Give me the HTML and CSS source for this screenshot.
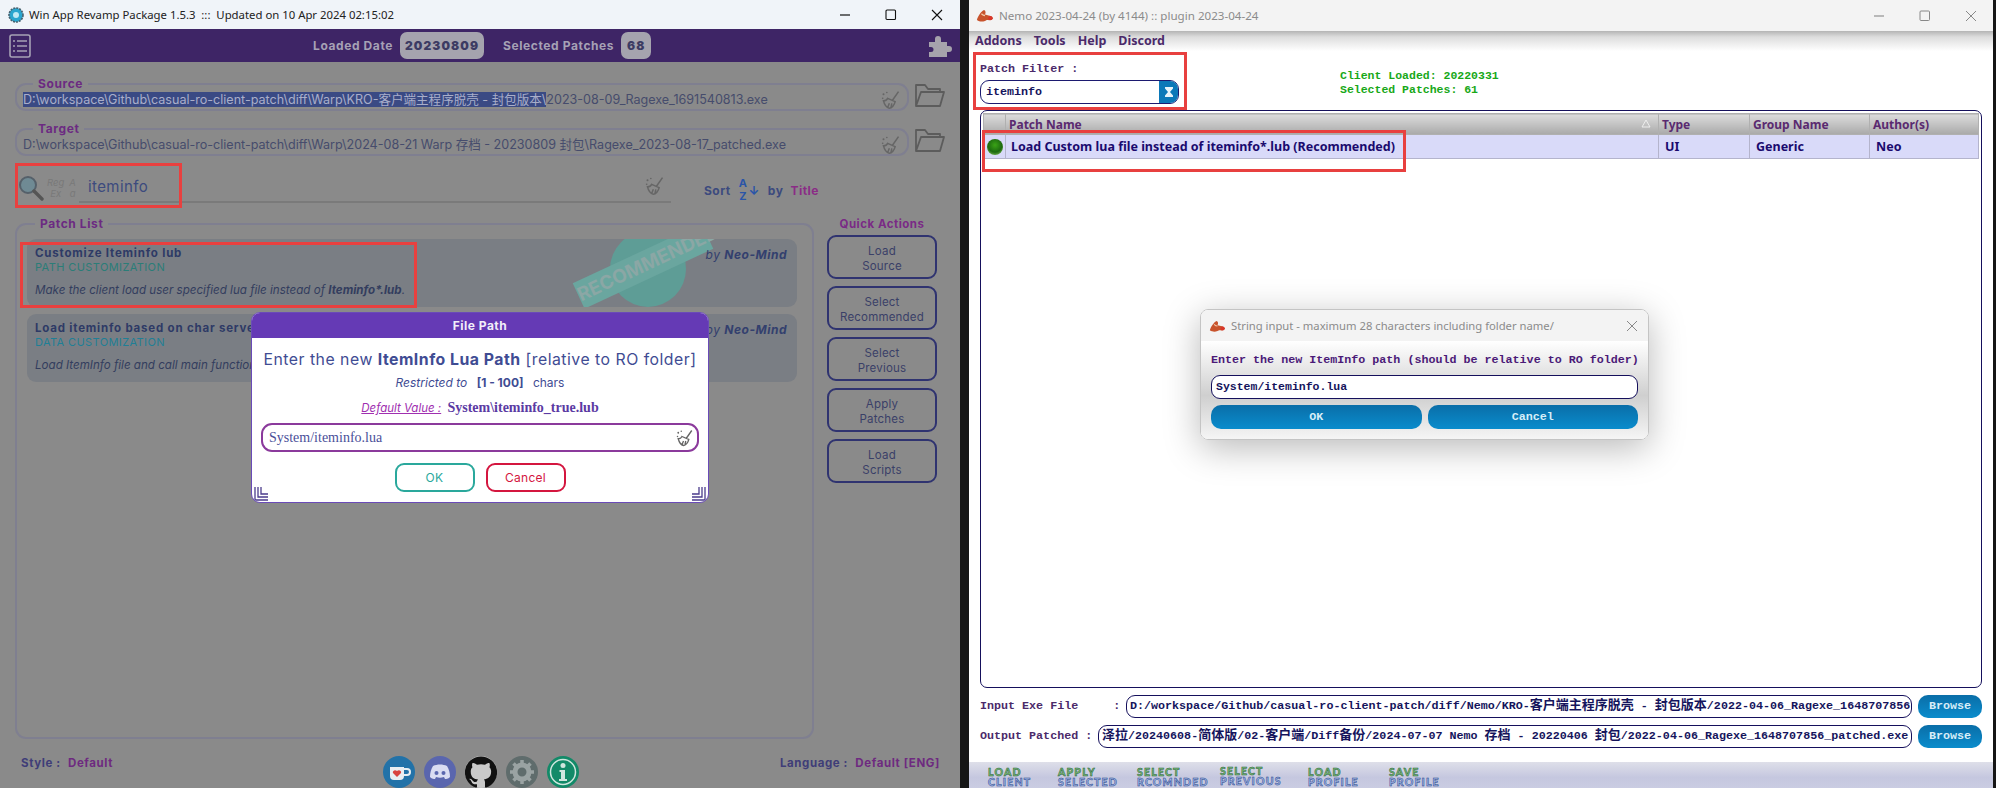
FILE: index.html
```html
<!DOCTYPE html>
<html lang="en">
<head>
  <meta charset="UTF-8">
  <title>Patchers</title>
  <link rel="stylesheet" href="styles.css">
</head>
<body>

  <svg class="defs" width="0" height="0">
    <symbol id="broom" viewBox="0 0 24 24">
      <path d="M21 2 14 12M8 10l9 4c-1 4-4 8-7 8-4-1-6-5-7-9 2 0 4-1 5-3ZM8 21l2-5M12 21l1-5" fill="none" stroke="currentColor" stroke-width="1.8"/>
      <circle cx="3" cy="5" r="1.2" fill="currentColor"/><circle cx="7" cy="3" r="1" fill="currentColor"/><circle cx="2" cy="10" r="1" fill="currentColor"/>
    </symbol>
    <symbol id="folder" viewBox="0 0 30 25">
      <path d="M1 23V2h9l3 4h12v3M1 23 6 9h23l-4 14H1Z" fill="none" stroke="currentColor" stroke-width="1.8" stroke-linejoin="round"/>
    </symbol>
    <symbol id="crab" viewBox="0 0 20 16">
      <path d="M1 13c1-4 5-10 8-11 2 1 2 3 1 5l4 1c2 0 4 1 5 3-2 3-5 2-7 2l-2 1c-3 1-6 1-9-1Z" fill="#c8532c"/>
      <path d="M6 6c1 1 3 2 4 2" stroke="#f3c9a8" stroke-width="1.4" fill="none"/>
      <circle cx="16" cy="11" r="2.4" fill="#d9362a"/>
    </symbol>
  </svg>

  <!-- left window -->
  <section class="win-left">
    <div class="title-bar">
      <svg class="app-icon" width="16" height="16" viewBox="0 0 16 16"><circle cx="8" cy="8" r="7" fill="#2aa6cf" stroke="#46606e" stroke-width="1.6" stroke-dasharray="2 1"/><circle cx="8" cy="8" r="3" fill="#bfeaf5"/></svg>
      <span class="title-text">Win App Revamp Package 1.5.3 &nbsp;:::&nbsp; Updated on 10 Apr 2024 02:15:02</span>
      <div class="win-btns">
        <svg width="12" height="12" viewBox="0 0 12 12"><path d="M1 6h10" stroke="#111" stroke-width="1.2"/></svg>
        <svg width="12" height="12" viewBox="0 0 12 12"><rect x="1" y="1" width="9.5" height="9.5" rx="1" fill="none" stroke="#111" stroke-width="1.1"/></svg>
        <svg width="12" height="12" viewBox="0 0 12 12"><path d="M1 1l10 10M11 1 1 11" stroke="#111" stroke-width="1.1"/></svg>
      </div>
    </div>

    <header class="top-bar">
      <svg class="menu-icon" width="22" height="24" viewBox="0 0 22 24"><rect x="1" y="1" width="20" height="22" rx="2" fill="none" stroke="#a6a1b5" stroke-width="1.6"/><path d="M8 7h10M8 12h10M8 17h10M4 7h2M4 12h2M4 17h2" stroke="#a6a1b5" stroke-width="1.6"/></svg>
      <div class="stats">
        <span>Loaded Date</span><b class="chip chip-date">20230809</b>
        <span class="stat-2">Selected Patches</span><b class="chip chip-count">68</b>
      </div>
      <svg class="puzzle" width="24" height="24" viewBox="0 0 24 24"><path d="M1 8h6V5a3 3 0 1 1 6 0v3h6v4h2a3 3 0 1 1 0 6h-2v5H1v-5h2a2.5 2.5 0 1 0 0-5H1Z" fill="#a6a3ac"/></svg>
    </header>

    <main class="main">
      <div class="path-row">
        <fieldset class="path-field">
          <legend>Source</legend>
          <div class="path-inner">
            <span class="path-text"><span class="sel">D:\workspace\Github\casual-ro-client-patch\diff\Warp\KRO-客户端主程序脱壳 - 封包版本\</span>2023-08-09_Ragexe_1691540813.exe</span>
            <svg class="broom" width="20" height="20"><use href="#broom"/></svg>
          </div>
        </fieldset>
        <svg class="folder" width="30" height="25"><use href="#folder"/></svg>
      </div>
      <div class="path-row">
        <fieldset class="path-field">
          <legend>Target</legend>
          <div class="path-inner">
            <span class="path-text">D:\workspace\Github\casual-ro-client-patch\diff\Warp\2024-08-21 Warp 存档 - 20230809 封包\Ragexe_2023-08-17_patched.exe</span>
            <svg class="broom" width="20" height="20"><use href="#broom"/></svg>
          </div>
        </fieldset>
        <svg class="folder" width="30" height="25"><use href="#folder"/></svg>
      </div>

      <div class="search-row">
        <svg class="magnifier" width="26" height="26" viewBox="0 0 26 26"><circle cx="10" cy="10" r="8" fill="#6f8a94" stroke="#55606a" stroke-width="2"/><path d="M16 16l8 8" stroke="#555" stroke-width="3.4" stroke-linecap="round"/></svg>
        <div class="search-flags">
          <span>Reg<br>Ex</span><span>A<br>a</span>
        </div>
        <div class="search-input">
          <span>iteminfo</span>
          <svg class="broom" width="20" height="20"><use href="#broom"/></svg>
        </div>
        <div class="sort">
          <span>Sort</span>
          <span class="az">A<br>Z</span><span class="az-arrow">↓</span>
          <span>by</span><span class="sort-key">Title</span>
        </div>
      </div>

      <div class="lower">
        <fieldset class="patch-list">
          <legend>Patch List</legend>
          <article class="card">
            <h3>Customize Iteminfo lub</h3>
            <p class="cat cat-path">PATH CUSTOMIZATION</p>
            <p class="desc">Make the client load user specified lua file instead of <b>Iteminfo*.lub</b>.</p>
            <i class="stamp-disc"></i>
            <span class="stamp">RECOMMENDED</span>
            <span class="by">by <b>Neo-Mind</b></span>
          </article>
          <article class="card">
            <h3>Load iteminfo based on char server</h3>
            <p class="cat cat-data">DATA CUSTOMIZATION</p>
            <p class="desc">Load ItemInfo file and call main function</p>
            <span class="by">by <b>Neo-Mind</b></span>
          </article>
        </fieldset>
        <aside class="quick">
          <h4>Quick Actions</h4>
          <button>Load<br>Source</button>
          <button>Select<br>Recommended</button>
          <button>Select<br>Previous</button>
          <button>Apply<br>Patches</button>
          <button>Load<br>Scripts</button>
        </aside>
      </div>

      <footer class="foot">
        <span class="foot-side">Style : <em>Default</em></span>
        <div class="foot-icons">
          <svg width="32" height="32" viewBox="0 0 32 32"><circle cx="16" cy="16" r="16" fill="#2272a8"/><path d="M7 11h14v9a4 4 0 0 1-4 4h-6a4 4 0 0 1-4-4Z" fill="#e8eef2"/><path d="M21 13h3a3 3 0 0 1 0 6h-3" fill="none" stroke="#e8eef2" stroke-width="2"/><path d="M14 21l-4-4c-1-2 2-4 4-2 2-2 5 0 4 2Z" fill="#d8433f"/></svg>
          <svg width="32" height="32" viewBox="0 0 32 32"><circle cx="16" cy="16" r="16" fill="#5a66ae"/><path d="M9 10c4-2 10-2 14 0 2 3 3 7 3 11-2 2-4 2-5 2l-1-2c-3 1-5 1-8 0l-1 2c-1 0-3 0-5-2 0-4 1-8 3-11Z" fill="#d9dcf2"/><circle cx="12.5" cy="17" r="2" fill="#5a66ae"/><circle cx="19.5" cy="17" r="2" fill="#5a66ae"/></svg>
          <svg width="32" height="32" viewBox="0 0 24 24"><circle cx="12" cy="12" r="12" fill="#c9c9c9"/><path fill="#111" d="M12 .3a12 12 0 0 0-3.8 23.4c.6.1.8-.3.8-.6v-2c-3.3.7-4-1.6-4-1.6-.6-1.4-1.4-1.8-1.4-1.8-1-.7.1-.7.1-.7 1.2.1 1.8 1.2 1.8 1.2 1 1.8 2.8 1.3 3.5 1 .1-.8.4-1.3.8-1.6-2.7-.3-5.5-1.3-5.5-6 0-1.2.5-2.3 1.3-3.1-.2-.4-.6-1.6 0-3.2 0 0 1-.3 3.4 1.2a11.5 11.5 0 0 1 6 0c2.3-1.5 3.3-1.2 3.3-1.2.6 1.6.2 2.8 0 3.2.9.8 1.3 1.9 1.3 3.2 0 4.6-2.8 5.6-5.5 5.9.5.4.9 1.1.9 2.2v3.3c0 .3.1.7.8.6A12 12 0 0 0 12 .3"/></svg>
          <svg width="32" height="32" viewBox="0 0 32 32"><circle cx="16" cy="16" r="16" fill="#5f6c6c"/><circle cx="16" cy="16" r="7" fill="none" stroke="#9aa3a3" stroke-width="5"/><path d="M16 4v5M16 23v5M4 16h5M23 16h5M7.5 7.5l3.5 3.5M21 21l3.5 3.5M7.5 24.5 11 21M21 11l3.5-3.5" stroke="#9aa3a3" stroke-width="3.5"/></svg>
          <svg width="32" height="32" viewBox="0 0 32 32"><circle cx="16" cy="16" r="16" fill="#128a68"/><circle cx="16" cy="16" r="12.5" fill="none" stroke="#cfe6de" stroke-width="1.5"/><circle cx="16" cy="9.5" r="2.5" fill="#cfe6de"/><path d="M12.5 14H18v9h2v2h-8v-2h2v-7h-1.5Z" fill="#cfe6de"/></svg>
        </div>
        <span class="foot-side foot-right">Language : <em>Default [ENG]</em></span>
      </footer>
    </main>

    <div class="modal">
      <div class="modal-head">File Path</div>
      <div class="modal-body">
        <p class="modal-title">Enter the new <b>ItemInfo Lua Path</b> [relative to RO folder]</p>
        <p class="modal-limit"><i>Restricted to</i> <b>[1 - 100]</b> chars</p>
        <p class="modal-default"><i>Default Value :</i> <b>System\iteminfo_true.lub</b></p>
        <div class="modal-input">
          <span>System/iteminfo.lua</span>
          <svg class="broom" width="18" height="18"><use href="#broom"/></svg>
        </div>
        <div class="modal-btns">
          <button class="btn-ok">OK</button>
          <button class="btn-cancel">Cancel</button>
        </div>
      </div>
      <svg class="grip grip-l" width="14" height="14" viewBox="0 0 14 14"><path d="M1 0v13h13M4 0v10h10M7 0v7h7" fill="none" stroke="#4b3b8c" stroke-width="1.3"/></svg>
      <svg class="grip grip-r" width="14" height="14" viewBox="0 0 14 14"><path d="M13 0v13H0M10 0v10H0M7 0v7H0" fill="none" stroke="#4b3b8c" stroke-width="1.3"/></svg>
    </div>
  </section>

  <!-- right window -->
  <section class="win-right">
    <div class="nemo-title">
      <svg width="18" height="15"><use href="#crab"/></svg>
      <span>Nemo 2023-04-24 (by 4144) :: plugin 2023-04-24</span>
      <div class="win-btns win-btns-dim">
        <svg width="12" height="12" viewBox="0 0 12 12"><path d="M1 6h10" stroke="#888" stroke-width="1.1"/></svg>
        <svg width="12" height="12" viewBox="0 0 12 12"><rect x="1" y="1" width="9.5" height="9.5" rx="1" fill="none" stroke="#888" stroke-width="1"/></svg>
        <svg width="12" height="12" viewBox="0 0 12 12"><path d="M1 1l10 10M11 1 1 11" stroke="#888" stroke-width="1"/></svg>
      </div>
    </div>
    <nav class="nemo-menu">
      <span>Addons</span><span>Tools</span><span>Help</span><span>Discord</span>
    </nav>

    <div class="filter-row">
      <div class="filter">
        <label>Patch Filter :</label>
        <div class="filter-input">
          <span>iteminfo</span>
          <i class="filter-btn"><svg width="8" height="10" viewBox="0 0 8 10"><path d="M0 0h8v1.5L5 5l3 3.5V10H0V8.5L3 5 0 1.5Z" fill="#e6f3fa"/></svg></i>
        </div>
      </div>
      <div class="client-info">Client Loaded: 20220331<br>Selected Patches: 61</div>
    </div>

    <div class="table-box">
      <table class="patches">
        <thead>
          <tr>
            <th class="col-ball"></th>
            <th class="col-name">Patch Name<svg class="sort-tri" width="10" height="9" viewBox="0 0 10 9"><path d="M5 1 9 8H1Z" fill="none" stroke="#eee" stroke-width="1"/></svg></th>
            <th class="col-type">Type</th>
            <th class="col-group">Group Name</th>
            <th class="col-author">Author(s)</th>
          </tr>
        </thead>
        <tbody>
          <tr>
            <td class="col-ball"><i class="ball"></i></td>
            <td class="col-name">Load Custom lua file instead of iteminfo*.lub (Recommended)</td>
            <td>UI</td>
            <td>Generic</td>
            <td>Neo</td>
          </tr>
        </tbody>
      </table>
    </div>

    <div class="file-row">
      <label class="file-label file-label-input">Input Exe File&nbsp;&nbsp;&nbsp;&nbsp;&nbsp;:</label>
      <div class="file-input">D:/workspace/Github/casual-ro-client-patch/diff/Nemo/KRO-<span class="cjk">客户端主程序脱壳</span> - <span class="cjk">封包版本</span>/2022-04-06_Ragexe_1648707856</div>
      <button class="browse">Browse</button>
    </div>
    <div class="file-row">
      <label class="file-label">Output Patched :</label>
      <div class="file-input file-output"><span class="cjk">泽拉</span>/20240608-<span class="cjk">简体版</span>/02-<span class="cjk">客户端</span>/Diff<span class="cjk">备份</span>/2024-07-07 Nemo <span class="cjk">存档</span> - 20220406 <span class="cjk">封包</span>/2022-04-06_Ragexe_1648707856_patched.exe</div>
      <button class="browse">Browse</button>
    </div>

    <div class="action-band">
      <div class="act act-1"><span>LOAD</span><span>CLIENT</span></div>
      <div class="act act-2"><span>APPLY</span><span>SELECTED</span></div>
      <div class="act act-3"><span>SELECT</span><span>RCOMNDED</span></div>
      <div class="act act-4"><span>SELECT</span><span>PREVIOUS</span></div>
      <div class="act act-5"><span>LOAD</span><span>PROFILE</span></div>
      <div class="act act-6"><span>SAVE</span><span>PROFILE</span></div>
    </div>

    <div class="str-dialog">
      <div class="str-title">
        <svg width="17" height="14"><use href="#crab"/></svg>
        <span>String input - maximum 28 characters including folder name/</span>
        <svg class="str-close" width="12" height="12" viewBox="0 0 12 12"><path d="M1 1l10 10M11 1 1 11" stroke="#888" stroke-width="1"/></svg>
      </div>
      <div class="str-body">
        <label>Enter the new ItemInfo path (should be relative to RO folder)</label>
        <div class="str-input">System/iteminfo.lua</div>
        <div class="str-btns">
          <button class="blue-btn">OK</button>
          <button class="blue-btn">Cancel</button>
        </div>
      </div>
    </div>
  </section>

  <!-- red marks drawn on top of the screenshot -->
  <div class="mark mark-search"></div>
  <div class="mark mark-card"></div>
  <div class="mark mark-filter"></div>
  <div class="mark mark-row"></div>

</body>
</html>
```

FILE: styles.css
```css
* {
  box-sizing: border-box;
}

html, body {
  margin: 0;
  width: 1996px;
  height: 788px;
  overflow: hidden;
}

body {
  position: relative;
  display: flex;
  background-color: #161616;
  font-family: "Inter", "Noto Sans CJK SC", sans-serif;
}

.defs {
  position: absolute;
}

button {
  font-family: inherit;
  cursor: pointer;
}

p, h3, h4 {
  margin: 0;
}

/* left window */
.win-left {
  position: relative;
  width: 960px;
  height: 788px;
  display: flex;
  flex-direction: column;
  background-color: #8a8a8a;
}

.title-bar {
  height: 29px;
  flex: none;
  display: flex;
  align-items: center;
  padding-left: 8px;
  background-color: #f0f4f9;
}

.app-icon {
  margin-right: 5px;
}

.title-text {
  font-family: "Noto Sans", sans-serif;
  font-size: 11.35px;
  color: #222;
}

.win-btns {
  margin-left: auto;
  display: flex;
  gap: 34px;
  padding-right: 17px;
}

.top-bar {
  height: 33px;
  flex: none;
  display: flex;
  align-items: center;
  padding: 0 8px 0 9px;
  background-color: #3e2566;
}

.stats {
  display: flex;
  align-items: center;
  margin-left: 282px;
  font-size: 12px;
  font-weight: 700;
  letter-spacing: .6px;
  color: #a6a1b5;
}

.chip {
  height: 27px;
  line-height: 27px;
  margin-left: 7px;
  border-radius: 7px;
  text-align: center;
  background-color: #a5a3ae;
  color: #3c3b63;
  letter-spacing: 1.1px;
}

.chip-date {
  width: 84px;
}

.chip-count {
  width: 30px;
}

.stat-2 {
  margin-left: 19px;
}

.puzzle {
  margin-left: auto;
}

.main {
  flex: 1;
  min-height: 0;
  display: flex;
  flex-direction: column;
  padding: 16px 15px 0;
}

.path-row {
  flex: none;
  display: flex;
  align-items: flex-end;
  gap: 6px;
  height: 33px;
  margin-bottom: 12px;
}

.path-field {
  flex: none;
  width: 894px;
  height: 33px;
  margin: 0;
  padding: 0 6px;
  border: 2px solid #7f7f90;
  border-radius: 11px;
  min-width: 0;
}

.path-field legend, .patch-list legend {
  margin-left: 10px;
  padding: 0 5px;
  font-size: 12px;
  line-height: 12px;
  font-weight: 700;
  letter-spacing: .6px;
  color: #6c2a82;
}

.patch-list legend {
  margin-left: 8px;
}

.path-inner {
  display: flex;
  align-items: center;
  justify-content: space-between;
  height: 19px;
}

.path-text {
  font-size: 12.55px;
  line-height: 15px;
  white-space: nowrap;
  color: #464c6c;
}

.sel {
  background-color: #3a4a84;
  color: #a9aeca;
}

.broom {
  flex: none;
  color: #666;
}

.folder {
  flex: none;
  margin-bottom: 3px;
  color: #5c5c5c;
}

.search-row {
  flex: none;
  height: 35px;
  display: flex;
  align-items: flex-end;
  padding-left: 3px;
}

.magnifier {
  margin-bottom: 2px;
}

.search-flags {
  width: 35px;
  display: flex;
  justify-content: center;
  gap: 5px;
  margin-bottom: 4px;
  font-size: 9.5px;
  line-height: 11px;
  font-style: italic;
  text-align: center;
  color: #797979;
}

.search-input {
  width: 592px;
  height: 28px;
  display: flex;
  align-items: center;
  justify-content: space-between;
  padding: 0 6px 4px 9px;
  border-bottom: 2px solid #7a7a7a;
  font-size: 15px;
  letter-spacing: .4px;
  color: #3c4a7e;
}

.sort {
  display: flex;
  align-items: center;
  gap: 7px;
  margin-left: 33px;
  font-size: 12px;
  font-weight: 700;
  letter-spacing: .5px;
  color: #3c4a7e;
}

.az {
  margin-left: 1px;
  font-size: 11px;
  line-height: 13px;
  text-align: center;
  color: #2a55a8;
}

.az-arrow {
  margin-left: -6px;
  margin-right: 1px;
  color: #2a55a8;
}

.sort-key {
  color: #8a2c86;
}

.lower {
  flex: none;
  display: flex;
  align-items: flex-start;
  height: 521px;
  margin-top: 15px;
}

.patch-list {
  flex: none;
  width: 799px;
  height: 521px;
  margin: 0;
  padding: 9px 15px 0 10px;
  border: 2px solid #7f7f90;
  border-radius: 11px;
}

.card {
  position: relative;
  overflow: hidden;
  height: 68px;
  margin-bottom: 7px;
  padding: 7px 8px;
  border-radius: 9px;
  background-color: #7a7e84;
}

.card h3 {
  font-size: 11.5px;
  line-height: 15px;
  font-weight: 700;
  letter-spacing: .8px;
  color: #2e3a66;
}

.cat {
  font-size: 11px;
  line-height: 13px;
  letter-spacing: .4px;
}

.cat-path {
  color: #2b7d78;
}

.cat-data {
  color: #1f7f96;
}

.desc {
  margin-top: 9px;
  font-size: 11.6px;
  line-height: 14px;
  font-style: italic;
  color: #333d5e;
}

.stamp-disc {
  position: absolute;
  left: 583px;
  top: -8px;
  width: 76px;
  height: 76px;
  border-radius: 50%;
  background-color: #5e9d96;
}

.stamp {
  position: absolute;
  left: 545px;
  top: 13px;
  width: 142px;
  padding: 3px 0;
  transform: rotate(-25deg);
  background-color: #6aa69f;
  font-size: 19px;
  font-weight: 700;
  line-height: 22px;
  white-space: nowrap;
  color: #8ba7a5;
}

.by {
  position: absolute;
  right: 10px;
  top: 8px;
  font-size: 12px;
  font-style: italic;
  letter-spacing: .5px;
  color: #33406e;
}

.quick {
  width: 123px;
  display: flex;
  flex-direction: column;
  align-items: flex-end;
  gap: 7px;
}

.quick h4 {
  width: 110px;
  height: 10px;
  font-size: 11.5px;
  line-height: 12px;
  letter-spacing: .5px;
  text-align: center;
  color: #7a2a86;
}

.quick button {
  width: 110px;
  height: 44px;
  padding: 3px 0 0;
  border: 2px solid #2f3370;
  border-radius: 9px;
  background: transparent;
  font-size: 11.5px;
  line-height: 15px;
  letter-spacing: .2px;
  color: #3a4068;
}

.foot {
  flex: none;
  display: flex;
  justify-content: space-between;
  align-items: flex-start;
  padding-top: 17px;
  margin: 0 5px 0 6px;
}

.foot-side {
  font-size: 11.5px;
  font-weight: 700;
  letter-spacing: .6px;
  color: #3f3d78;
}

.foot-side em {
  margin-left: 4px;
  font-style: normal;
  color: #6e2a80;
}

.foot-icons {
  position: relative;
  left: 35px;
  display: flex;
  gap: 9px;
}

/* html file path dialog */
.modal {
  position: absolute;
  left: 251px;
  top: 312px;
  width: 458px;
  height: 191px;
  border: 1px solid #6a4bb8;
  border-radius: 9px;
  overflow: hidden;
  background-color: #fff;
}

.modal-head {
  height: 25px;
  line-height: 25px;
  text-align: center;
  font-size: 12px;
  font-weight: 700;
  letter-spacing: .5px;
  color: #f2eef9;
  background-color: #653ab5;
}

.modal-body {
  display: flex;
  flex-direction: column;
  align-items: center;
  padding-top: 12px;
}

.modal-title {
  font-size: 15.8px;
  line-height: 20px;
  letter-spacing: .5px;
  white-space: nowrap;
  color: #3f4c93;
}

.modal-limit {
  margin-top: 6px;
  font-size: 12px;
  line-height: 14px;
  color: #3f4c93;
}

.modal-limit b {
  margin: 0 6px;
}

.modal-default {
  margin-top: 10px;
  font-size: 11.5px;
  line-height: 16px;
}

.modal-default i {
  color: #a02fb0;
  text-decoration: underline;
}

.modal-default b {
  margin-left: 3px;
  font-family: "Liberation Serif", serif;
  font-size: 14px;
  color: #5b3aa3;
}

.modal-input {
  width: 438px;
  height: 29px;
  margin-top: 7px;
  display: flex;
  align-items: center;
  justify-content: space-between;
  padding: 0 3px 0 6px;
  border: 2px solid #8b3a9c;
  border-radius: 11px;
  font-family: "Liberation Serif", serif;
  font-size: 14px;
  color: #4a4f99;
}

.modal-btns {
  display: flex;
  gap: 11px;
  margin-top: 11px;
}

.modal-btns button {
  width: 80px;
  height: 29px;
  border-radius: 9px;
  background: #fff;
  border: 2px solid;
  font-size: 12px;
  letter-spacing: .3px;
}

.btn-ok {
  border-color: #2aa89c !important;
  color: #2aa89c;
}

.btn-cancel {
  border-color: #d4163f !important;
  color: #d4163f;
}

.grip {
  position: absolute;
  bottom: 1px;
}

.grip-l {
  left: 2px;
}

.grip-r {
  right: 2px;
}

/* right window */
.win-right {
  position: relative;
  width: 1024px;
  height: 788px;
  margin-left: 9px;
  display: flex;
  flex-direction: column;
  background-color: #fff;
  font-family: "Liberation Mono", "Noto Sans CJK SC", monospace;
}

.nemo-title {
  height: 31px;
  flex: none;
  display: flex;
  align-items: center;
  gap: 5px;
  padding-left: 7px;
  background-color: #f3f3f3;
  font-family: "Noto Sans", sans-serif;
  font-size: 11.6px;
  color: #8b8b8b;
}

.win-btns-dim {
  gap: 34px;
  padding-right: 16px;
}

.nemo-menu {
  height: 20px;
  flex: none;
  display: flex;
  align-items: center;
  gap: 12px;
  padding: 0 0 2px 6px;
  background: linear-gradient(#b4b4b4, #dddddd 30%, #fff);
  font-family: "Noto Sans", sans-serif;
  font-size: 12.5px;
  font-weight: 700;
  color: #4b2a6a;
}

.filter-row {
  height: 59px;
  flex: none;
  display: flex;
  padding: 11px 0 0 11px;
}

.filter {
  width: 360px;
}

.filter label {
  display: block;
  height: 18px;
  font-size: 11.7px;
  font-weight: 700;
  color: #4b2a6a;
}

.filter-input {
  width: 199px;
  height: 24px;
  display: flex;
  align-items: center;
  justify-content: space-between;
  padding-left: 5px;
  border: 1.5px solid #1c1a70;
  border-radius: 9px;
  overflow: hidden;
  font-size: 11.7px;
  font-weight: 700;
  color: #15145c;
}

.filter-btn {
  width: 19px;
  height: 100%;
  display: flex;
  align-items: center;
  justify-content: center;
  background-color: #0b78b8;
}

.client-info {
  margin-top: 7px;
  font-size: 11.5px;
  line-height: 14px;
  font-weight: 700;
  color: #18a818;
}

.table-box {
  width: 1002px;
  height: 578px;
  flex: none;
  margin-left: 11px;
  padding: 2px 2px 0;
  border: 1.5px solid #15105c;
  border-radius: 7px;
}

.patches {
  width: 100%;
  table-layout: fixed;
  border-collapse: collapse;
  font-family: "Noto Sans", sans-serif;
  font-size: 12px;
}

.patches th {
  height: 21px;
  padding: 0 3px;
  text-align: left;
  position: relative;
  border: 1px solid #b0b0b0;
  background: linear-gradient(#dcdcdc, #a9a9a9);
  color: #5a2a70;
}

.patches td {
  height: 24px;
  padding: 0 6px;
  border: 1px solid #b4b4cc;
  background-color: #d9daf9;
  font-size: 12.5px;
  font-weight: 700;
  color: #1a0a6e;
}

.col-ball {
  width: 22px;
}

.patches td.col-ball {
  padding: 0;
}

.patches td.col-name {
  padding-left: 5px;
}

.col-name {
  width: 653px;
}

.col-type {
  width: 91px;
}

.col-group {
  width: 120px;
}

.sort-tri {
  position: absolute;
  right: 7px;
  top: 5px;
}

.ball {
  display: block;
  width: 16px;
  height: 16px;
  margin: 0 auto;
  border-radius: 50%;
  background: radial-gradient(circle at 50% 38%, #3aa316, #1d6a10 55%, #a2d870);
}

.file-row {
  height: 30px;
  flex: none;
  display: flex;
  align-items: center;
  padding-left: 11px;
}

.table-box + .file-row {
  margin-top: 3px;
}

.file-label {
  flex: none;
  width: 118px;
  white-space: nowrap;
  font-size: 11.7px;
  font-weight: 700;
  color: #4b2a6a;
}

.file-label-input {
  width: 146px;
}

.file-input {
  flex: none;
  height: 23px;
  line-height: 20px;
  width: 786px;
  padding: 0 2px 0 3px;
  overflow: hidden;
  white-space: nowrap;
  border: 1.5px solid #15105c;
  border-radius: 9px;
  font-size: 11.7px;
  font-weight: 700;
  color: #15145c;
  background-color: #fff;
}

.file-output {
  width: 814px;
}

.cjk {
  font-size: 13px;
}

.browse {
  width: 64px;
  height: 23px;
  margin-left: 6px;
  padding: 0;
  border: 0;
  border-radius: 10px;
  background: linear-gradient(#0a6ea8, #0a8ccc);
  font-family: inherit;
  font-size: 11.7px;
  font-weight: 700;
  color: #d8eef8;
}

.action-band {
  flex: 1;
  margin-top: 11px;
  display: flex;
  padding-left: 19px;
  background: linear-gradient(#dedfe9, #c5c7df 60%, #cacce2);
  font-family: "Lato", sans-serif;
  font-size: 10.5px;
  line-height: 10px;
  font-weight: 900;
}

.act {
  display: flex;
  flex-direction: column;
  padding-top: 5px;
  letter-spacing: 1.2px;
}

.act span:first-child {
  color: #7dba74;
  -webkit-text-stroke: .5px #1e5e3c;
}

.act span:last-child {
  color: #a3b8ea;
  -webkit-text-stroke: .5px #1d3f86;
}

.act-1 {
  width: 70px;
}

.act-2 {
  width: 79px;
}

.act-3 {
  width: 83px;
}

.act-4 {
  width: 88px;
  padding-top: 4px;
}

.act-5 {
  width: 81px;
}

/* nemo string dialog */
.str-dialog {
  position: absolute;
  left: 231px;
  top: 309px;
  width: 449px;
  height: 131px;
  border: 1px solid #c4c4c4;
  border-radius: 8px;
  overflow: hidden;
  box-shadow: 0 8px 36px rgba(0, 0, 0, .28);
}

.str-title {
  height: 31px;
  display: flex;
  align-items: center;
  gap: 5px;
  padding-left: 8px;
  background-color: #f3f3f3;
  font-family: "Noto Sans", sans-serif;
  font-size: 11.25px;
  color: #8b8b8b;
}

.str-close {
  margin-left: auto;
  margin-right: 10px;
}

.str-body {
  height: 99px;
  padding: 12px 10px 0;
  background: linear-gradient(#fff, #cfcfcf 55%, #f6f6f6);
}

.str-body label {
  display: block;
  height: 22px;
  white-space: nowrap;
  font-size: 11.7px;
  font-weight: 700;
  color: #4b1a78;
}

.str-input {
  height: 24px;
  line-height: 21px;
  padding-left: 4px;
  border: 1.5px solid #15105c;
  border-radius: 9px;
  background-color: #fff;
  font-size: 11.5px;
  font-weight: 700;
  color: #15145c;
}

.str-btns {
  display: flex;
  gap: 6px;
  margin-top: 6px;
}

.blue-btn {
  flex: 1;
  height: 24px;
  padding: 0;
  border: 0;
  border-radius: 10px;
  background: linear-gradient(#0a6ea8, #0a8ccc);
  font-family: inherit;
  font-size: 11.7px;
  font-weight: 700;
  color: #d8eef8;
}

/* red annotation boxes */
.mark {
  position: absolute;
  border: 3px solid #e8403f;
}

.mark-search {
  left: 15px;
  top: 163px;
  width: 167px;
  height: 45px;
}

.mark-card {
  left: 20px;
  top: 242px;
  width: 397px;
  height: 66px;
}

.mark-filter {
  left: 973px;
  top: 52px;
  width: 214px;
  height: 58px;
}

.mark-row {
  left: 982px;
  top: 130px;
  width: 424px;
  height: 42px;
}
```
